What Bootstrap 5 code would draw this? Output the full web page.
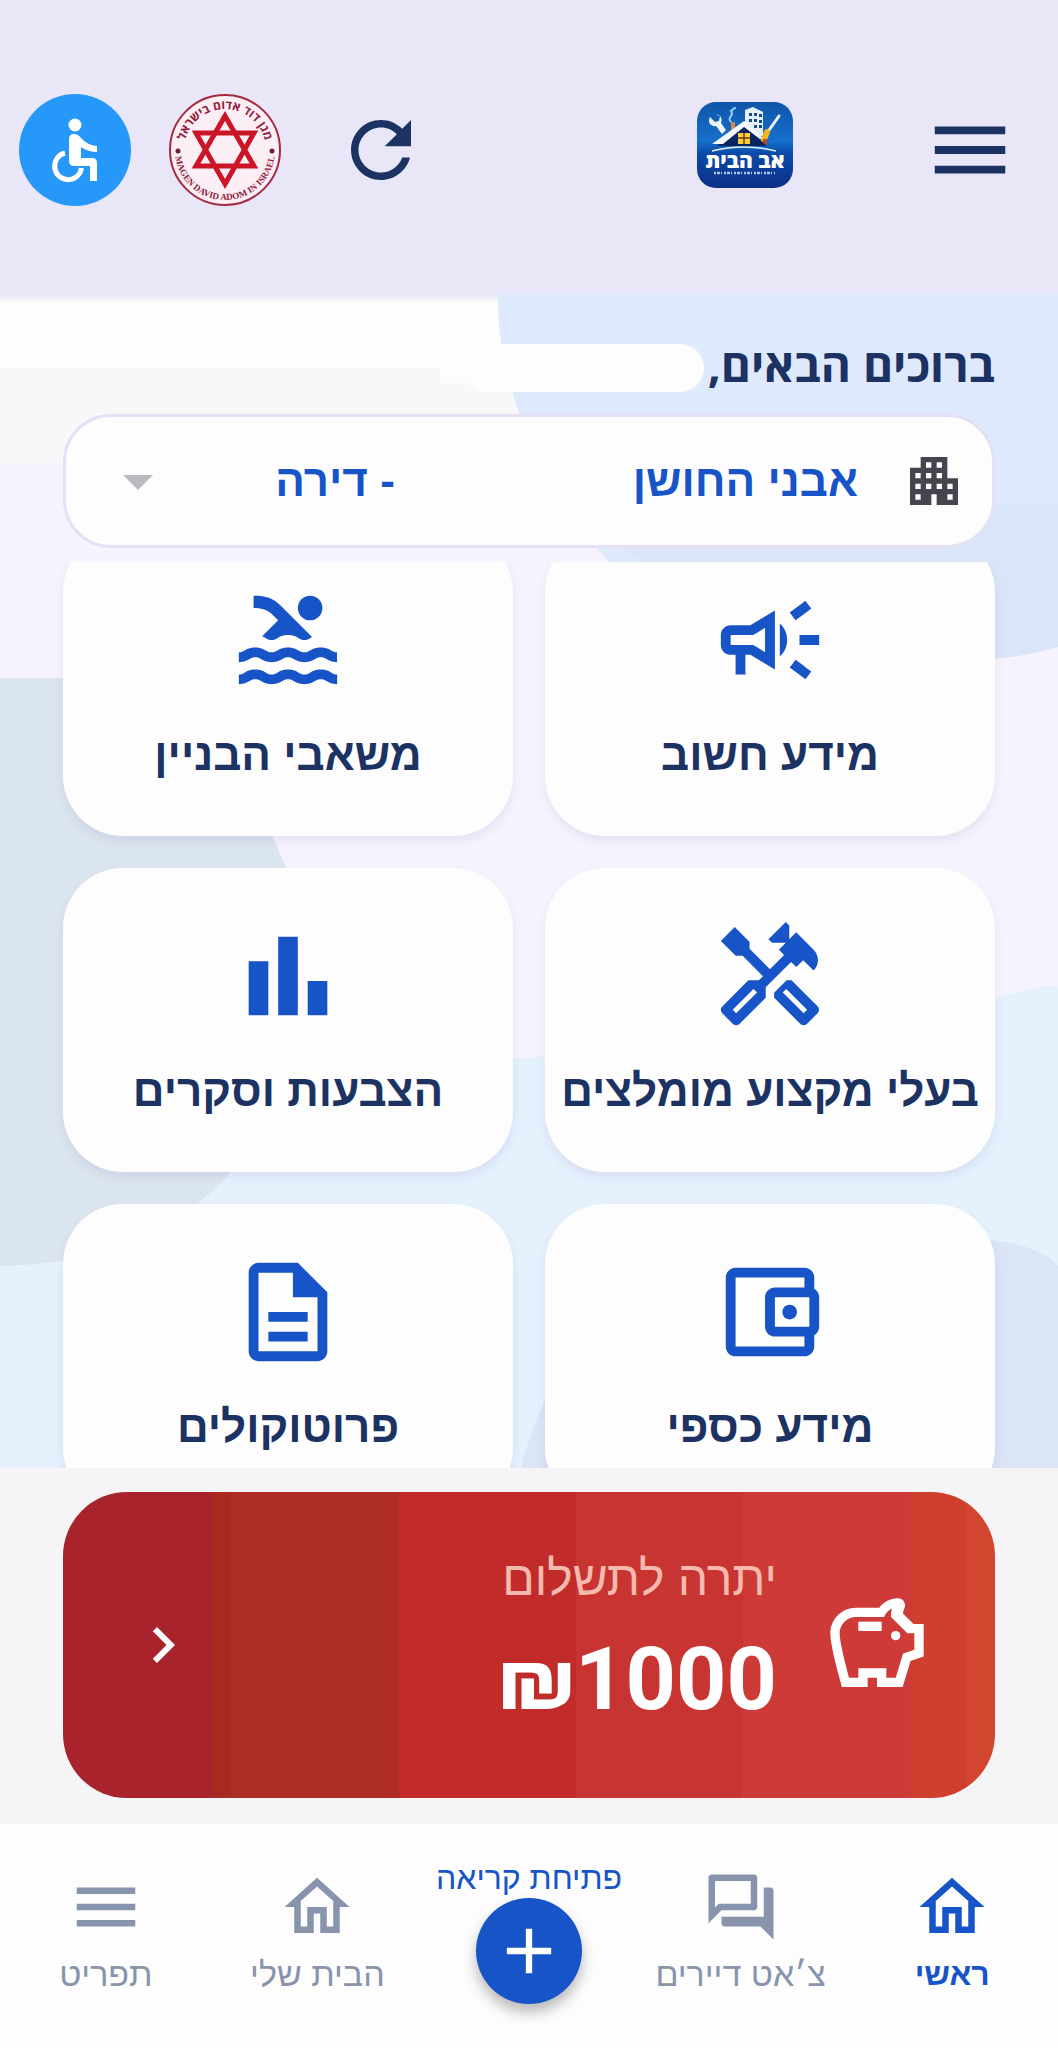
<!DOCTYPE html>
<html lang="he" dir="rtl">
<head>
<meta charset="utf-8">
<meta name="viewport" content="width=device-width, initial-scale=1">
<title>אב הבית</title>
<link href="https://cdn.jsdelivr.net/npm/bootstrap@5.3.0/dist/css/bootstrap.min.css" rel="stylesheet">
<style>
  :root { --navy: #1c3263; --brand: #1654c8; --muted: #8794ab; --side: 63px; }
  body { font-family: "Liberation Sans", sans-serif; background: #f6f3fe; color: var(--navy); }
  svg { display: block; flex: none; }
  .icon-btn { background: none; border: 0; padding: 0; color: var(--navy); }

  .top-bar { background: #e9e7f7; padding: 94px 41px 88px 19px; }
  .brand-logo { margin: 0 130px 10px 0; }
  .tools { gap: 38px; }
  .refresh-btn { margin-left: 17px; }

  main { min-height: 0; flex: 1 1 0; }
  .backdrop { inset: 0; width: 100%; height: 100%; }
  .welcome { padding: 46px var(--side) 0; height: 120px; }
  .welcome h1 { font-family: "Open Sans", "Liberation Sans", sans-serif; font-size: 46px; line-height: 48px; font-weight: 700; }
  .name-slot { width: 240px; height: 48px; background: #fdfdfe; border-radius: 24px; }
  .picker { margin: 0 var(--side); height: 134px; border-radius: 48px; background: #fdfdfe; border: 3px solid #e4e0f5; padding: 0 26px 0 36px; gap: 44px; }
  .picker label, .picker select { font-size: 44px; line-height: 56px; font-weight: 700; color: var(--brand); }
  .picker select { border: 0; padding: 0 194px 0 72px; appearance: none; outline: 0;
    background: transparent url("data:image/svg+xml,%3Csvg xmlns='http://www.w3.org/2000/svg' viewBox='0 0 24 24'%3E%3Cpath fill='%23b9b9be' d='M7 10l5 5 5-5z'/%3E%3C/svg%3E") no-repeat left center / 72px; }
  .scroller { margin-top: 14px; padding: 0 var(--side); min-height: 0; flex: 1 1 0; overflow: hidden auto; scrollbar-width: none; }
  .scroller::-webkit-scrollbar { display: none; }
  .tiles { display: grid; grid-template-columns: 1fr 1fr; gap: 32px; margin-top: -30px; }
  .tile { height: 304px; padding-top: 49px; gap: 24px; border-radius: 60px; background: #fdfdfe; color: var(--navy); font-size: 44px; line-height: 64px; font-weight: 700; box-shadow: 0 5px 10px rgba(90, 70, 150, .1); white-space: nowrap; }
  .tile svg { color: var(--brand); }

  .pay-area { background: #f5f5f8; padding: 24px var(--side) 26px; }
  .pay { height: 306px; border-radius: 64px; padding: 0 62px 0 64px; color: #fff;
    background: linear-gradient(90deg, #a8232b 0 16%, #a8291f 16% 18%, #ae2d26 18% 36%, #c12c2b 36% 55%, #c83432 55% 73%, #cd3a38 73% 91%, #ce3f2d 91% 97%, #d2452f 97%); }
  .pay-text { margin-right: 44px; gap: 20px; }
  .pay-label { font-size: 48px; line-height: 56px; color: #f5b9ae; }
  .pay-sum { font-family: Roboto, "Open Sans", sans-serif; font-size: 88px; line-height: 104px; font-weight: 700; }

  .tabs { background: #fdfdfe; padding: 44px 0 0; height: 224px; }
  .tab { flex: 1 1 0; color: var(--muted); font-size: 34px; line-height: 40px; gap: 8px; white-space: nowrap; }
  .tab.active { color: var(--brand); font-size: 32px; font-weight: 700; }
  .tab-add { color: var(--brand); gap: 10px; }
  .tab-add .add-label { font-size: 32px; line-height: 20px; }
  .add-disc { width: 106px; height: 106px; background: var(--brand); color: #fff; box-shadow: 0 8px 14px rgba(0, 0, 0, .28); }
</style>
<script src="https://cdn.jsdelivr.net/npm/bootstrap@5.3.0/dist/js/bootstrap.bundle.min.js"></script>
</head>
<body class="d-flex flex-column vh-100">

<header class="top-bar d-flex align-items-center flex-shrink-0">
  <button class="icon-btn" type="button" aria-label="תפריט">
    <svg width="94" height="94" viewBox="0 0 24 24" fill="currentColor"><path d="M3 18h18v-2H3v2zm0-5h18v-2H3v2zm0-7v2h18V6H3z"/></svg>
  </button>
  <a class="brand-logo" href="#" aria-label="אב הבית">
    <svg width="96" height="86" viewBox="0 0 96 86">
      <defs><linearGradient id="sky" x1="0" y1="0" x2="0" y2="1"><stop offset="0" stop-color="#0f55a8"/><stop offset=".45" stop-color="#1670cd"/><stop offset=".6" stop-color="#0b4aa8"/><stop offset="1" stop-color="#0c2f86"/></linearGradient></defs>
      <rect width="96" height="86" rx="19" fill="url(#sky)"/>
      <path d="M34 20c-5-5 4-6 0-11 4-3 2-3 5-3" fill="none" stroke="#8fd0f5" stroke-width="2"/>
      <path d="M48 8l8-3 10 5v24H48z" fill="#e6f0fa"/>
      <path d="M52 11h3v3h-3zm5 0h3v3h-3zm5 1h3v3h-3zM52 17h3v3h-3zm5 0h3v3h-3zm5 1h3v3h-3zM57 23h3v3h-3zm5 0h3v3h-3z" fill="#164a8e"/>
      <path d="M13 15l5 5 4-1 1-5-4-1c4-1 7 4 5 8l5 7-4 4-6-8c-5 1-9-4-6-9z" fill="#edf4fb"/>
      <path d="M82 14l-12 17" stroke="#edf4fb" stroke-width="3" stroke-linecap="round"/>
      <path d="M70 30l-4 10" stroke="#f3b51d" stroke-width="6" stroke-linecap="round"/>
      <path d="M68 37v6" stroke="#b64a2b" stroke-width="4"/>
      <path d="M34 20h4v7l-4 3z" fill="#d5894c"/>
      <path d="M20 44l27-21 23 21z" fill="#0a2460"/>
      <path d="M15 42l32-23 19 17-3 1-16-12-21 17z" fill="#f2f7fc"/>
      <path d="M41 31h12v11H41z" fill="#ffce3a"/><path d="M47 31v11M41 36h12" stroke="#6e3c12" stroke-width="1.5"/>
      <path d="M15 49q32-8 64 0" fill="none" stroke="#eaf3fb" stroke-width="1.5"/>
      <text x="48" y="66" text-anchor="middle" font-family="Open Sans, sans-serif" font-weight="800" font-size="21" fill="#fff">אב הבית</text>
      <path d="M17 71h61" stroke="#a9c8ee" stroke-width="2.5" stroke-dasharray="2 1 3 1 1 2"/>
    </svg>
  </a>
  <div class="tools d-flex align-items-center me-auto">
    <button class="icon-btn refresh-btn" type="button" aria-label="רענון">
      <svg width="90" height="90" viewBox="0 0 24 24" fill="currentColor"><path d="M17.65 6.35C16.2 4.9 14.21 4 12 4c-4.42 0-7.99 3.58-7.99 8s3.57 8 7.99 8c3.73 0 6.84-2.55 7.73-6h-2.08c-.82 2.33-3.04 4-5.65 4-3.31 0-6-2.69-6-6s2.69-6 6-6c1.66 0 3.14.69 4.22 1.78L13 11h7V4l-2.35 2.35z"/></svg>
    </button>
    <a href="#" aria-label="מגן דוד אדום">
      <svg width="112" height="112" viewBox="-56 -56 112 112">
        <defs>
          <path id="arcTop" d="M-41 0a41 41 0 0 1 82 0"/>
          <path id="arcLow" d="M-50 0a50 50 0 0 0 100 0"/>
        </defs>
        <circle r="55" fill="#fbeef5" stroke="#a52a3f" stroke-width="2"/>
        <g fill="none" stroke="#cb1526" stroke-width="5"><path d="M0-34L29 16h-58z"/><path d="M0 34L29-17h-58z"/></g>
        <circle cx="-47" cy="1" r="2.5" fill="#6e2235"/><circle cx="47" cy="1" r="2.5" fill="#6e2235"/>
        <text font-family="Open Sans, sans-serif" font-weight="700" font-size="12" fill="#92213a" text-anchor="middle" direction="ltr"><textPath href="#arcTop" startOffset="50%">מגן דוד אדום בישראל</textPath></text>
        <text font-family="Liberation Serif, serif" font-size="9" font-weight="700" fill="#92213a" text-anchor="middle" direction="ltr"><textPath href="#arcLow" startOffset="50%">MAGEN DAVID ADOM IN ISRAEL</textPath></text>
      </svg>
    </a>
    <button class="icon-btn" type="button" aria-label="נגישות">
      <svg width="112" height="112" viewBox="0 0 112 112">
        <circle cx="56" cy="56" r="56" fill="#2598fa"/>
        <circle cx="56" cy="31" r="6.5" fill="#fff"/>
        <path d="M50 45q0-5 5-5 4 0 7 4 6 7 16 8v6q-9 0-16-5v11h11q5 0 5 5v18h-7V72H55q-5 0-5-5z" fill="#fff"/>
        <path d="M46 59a13.500 13.500 0 1 0 16.500 15" fill="none" stroke="#fff" stroke-width="5"/>
      </svg>
    </button>
  </div>
</header>

<main class="position-relative d-flex flex-column overflow-hidden">
  <svg class="backdrop position-absolute" viewBox="0 294 1058 1174" preserveAspectRatio="none" aria-hidden="true">
    <defs><linearGradient id="edge" x1="0" y1="0" x2="0" y2="1"><stop offset="0" stop-color="#e9e7f7"/><stop offset="1" stop-color="#fdfdfe"/></linearGradient></defs>
    <path fill="#f6f3fe" d="M0 294h1058v1174H0z"/>
    <path fill="#f8f8fa" d="M0 360h560v104H0z"/>
    <path fill="#fdfdfe" d="M0 303h530v80H440v-15H170v0H0z"/>
    <path fill="url(#edge)" d="M0 294h530v10H0z"/>
    <path fill="#dfe9fc" d="M498 294h560v330H700Q560 560 510 384 497 340 498 294z"/>
    <path fill="#dae5f8" d="M600 530h340v-27h118v144q-100 30-220-10-140-20-238-107z"/>
    <path fill="#e5f1fd" d="M1058 985q-60 5-120 40L500 1060q-150 60-280 120L0 1260v208h1058z"/>
    <path fill="#dbe5f0" d="M0 678h60q180 30 240 230 10 170-70 265-80 90-230 93z"/>
    <path fill="#dbe5f6" d="M1058 1266q-20-22-70-26-200 20-360 50-80 70-107 178h537z"/>
  </svg>

  <div class="welcome position-relative d-flex align-items-start flex-shrink-0">
    <h1 class="m-0 flex-shrink-0">ברוכים הבאים,</h1>
    <span class="name-slot me-1 mt-1"></span>
  </div>

  <div class="picker position-relative d-flex align-items-center flex-shrink-0">
    <svg width="64" height="64" viewBox="0 0 24 24" fill="#45454f"><path d="M17 11V3H7v4H3v14h8v-4h2v4h8V11h-4zM7 19H5v-2h2v2zm0-4H5v-2h2v2zm0-4H5V9h2v2zm4 4H9v-2h2v2zm0-4H9V9h2v2zm0-4H9V5h2v2zm4 8h-2v-2h2v2zm0-4h-2V9h2v2zm0-4h-2V5h2v2zm4 12h-2v-2h2v2zm0-4h-2v-2h2v2z"/></svg>
    <label class="flex-shrink-0" for="flat">אבני החושן</label>
    <select class="flex-fill" id="flat"><option>- דירה</option></select>
  </div>

  <div class="scroller position-relative">
    <nav class="tiles">
      <a class="tile d-flex flex-column align-items-center text-decoration-none" href="#">
        <svg width="118" height="118" viewBox="0 0 24 24" fill="currentColor"><path d="M18 11v2h4v-2h-4zM16 17.610c.96.71 2.210 1.650 3.200 2.390.4-.53.8-1.070 1.200-1.600-.99-.74-2.240-1.680-3.200-2.400-.4.54-.8 1.080-1.200 1.610zM20.400 5.600c-.4-.53-.8-1.070-1.200-1.600-.99.74-2.240 1.680-3.200 2.400.4.53.8 1.070 1.200 1.600.96-.72 2.210-1.650 3.200-2.400zM4 9c-1.100 0-2 .9-2 2v2c0 1.100.9 2 2 2h1v4h2v-4h1l5 3V6L8 9H4zm5.030 1.710L11 9.530v4.940l-1.970-1.180-.48-.29H4v-2h4.550l.48-.29zM15.500 12c0-1.330-.58-2.530-1.500-3.350v6.690c.92-.81 1.500-2.010 1.500-3.340z"/></svg>
        <span>מידע חשוב</span>
      </a>
      <a class="tile d-flex flex-column align-items-center text-decoration-none" href="#">
        <svg width="118" height="118" viewBox="0 0 24 24" fill="currentColor"><path d="M22 21c-1.110 0-1.730-.37-2.180-.64-.37-.22-.6-.36-1.150-.36-.56 0-.78.13-1.150.36-.46.27-1.070.64-2.180.64s-1.730-.37-2.180-.64c-.37-.22-.6-.36-1.150-.36-.56 0-.78.13-1.150.36-.46.27-1.080.64-2.190.64-1.110 0-1.730-.37-2.180-.64-.37-.23-.6-.36-1.150-.36s-.78.13-1.150.36c-.46.27-1.080.64-2.190.64v-2c.56 0 .78-.13 1.150-.36.46-.27 1.080-.64 2.190-.64s1.730.37 2.180.64c.37.23.59.36 1.150.36.56 0 .78-.13 1.150-.36.46-.27 1.080-.64 2.190-.64 1.110 0 1.730.37 2.180.64.37.22.6.36 1.150.36s.78-.13 1.150-.36c.45-.27 1.070-.64 2.180-.64s1.730.37 2.180.64c.37.23.59.36 1.150.36v2zm0-4.500c-1.110 0-1.730-.37-2.180-.64-.37-.22-.6-.36-1.150-.36-.56 0-.78.13-1.150.36-.45.27-1.070.64-2.180.64s-1.730-.37-2.180-.64c-.37-.22-.6-.36-1.150-.36-.56 0-.78.13-1.150.36-.45.27-1.070.64-2.180.64s-1.730-.37-2.180-.64c-.37-.22-.6-.36-1.150-.36s-.78.13-1.150.36c-.47.27-1.090.64-2.200.64v-2c.56 0 .78-.13 1.150-.36.45-.27 1.070-.64 2.180-.64s1.730.37 2.180.64c.37.22.6.36 1.150.36.56 0 .78-.13 1.150-.36.45-.27 1.070-.64 2.180-.64s1.730.37 2.180.64c.37.22.6.36 1.150.36s.78-.13 1.150-.36c.45-.27 1.070-.64 2.180-.64s1.730.37 2.180.64c.37.22.6.36 1.150.36v2zM8.670 12c.56 0 .78-.13 1.150-.36.46-.27 1.080-.64 2.190-.64 1.110 0 1.730.37 2.180.64.37.22.6.36 1.150.36s.78-.13 1.150-.36c.12-.07.26-.15.41-.23L10.480 5C8.930 3.450 7.500 2.990 5 3v2.500c1.820-.01 2.890.39 4 1.500l1 1-3.250 3.250c.31.12.56.27.77.39.37.23.59.36 1.150.36z"/><circle cx="16.500" cy="5.500" r="2.500"/></svg>
        <span>משאבי הבניין</span>
      </a>
      <a class="tile d-flex flex-column align-items-center text-decoration-none" href="#">
        <svg width="118" height="118" viewBox="0 0 24 24" fill="currentColor"><path d="M21.670 18.170l-5.300-5.300h-.99l-2.540 2.540v.99l5.300 5.300c.39.39 1.020.39 1.410 0l2.120-2.120c.39-.38.39-1.020 0-1.410zm-2.830 1.420l-4.240-4.240.71-.71 4.240 4.240-.71.71z"/><path d="M17.340 10.190l1.410-1.410 2.120 2.120c1.170-1.170 1.170-3.070 0-4.240l-3.540-3.540-1.410 1.410V1.710L15.220 1l-3.540 3.540.71.71h2.830l-1.410 1.410 1.060 1.060-2.890 2.890-4.130-4.130V5.060L4.830 2.040 2 4.870 5.030 7.900h1.410l4.130 4.130-.85.85H7.600l-5.300 5.300c-.39.39-.39 1.020 0 1.410l2.120 2.120c.39.39 1.020.39 1.410 0l5.300-5.300v-2.120l5.150-5.150 1.060 1.050zm-7.980 5.150l-4.240 4.240-.71-.71 4.240-4.240.71.71z"/></svg>
        <span>בעלי מקצוע מומלצים</span>
      </a>
      <a class="tile d-flex flex-column align-items-center text-decoration-none" href="#">
        <svg width="118" height="118" viewBox="0 0 24 24" fill="currentColor"><path d="M4 9h4v11H4zM10 4h4v16h-4zM16 13h4v7h-4z"/></svg>
        <span>הצבעות וסקרים</span>
      </a>
      <a class="tile d-flex flex-column align-items-center text-decoration-none" href="#">
        <svg width="118" height="118" viewBox="0 0 24 24" fill="currentColor"><path d="M21 7.280V5c0-1.100-.9-2-2-2H5c-1.110 0-2 .9-2 2v14c0 1.100.89 2 2 2h14c1.100 0 2-.9 2-2v-2.280c.59-.35 1-.98 1-1.720V9c0-.74-.41-1.370-1-1.720zM20 9v6h-7V9h7zM5 19V5h14v2h-6c-1.100 0-2 .9-2 2v6c0 1.100.9 2 2 2h6v2H5z"/><circle cx="16" cy="12" r="1.500"/></svg>
        <span>מידע כספי</span>
      </a>
      <a class="tile d-flex flex-column align-items-center text-decoration-none" href="#">
        <svg width="118" height="118" viewBox="0 0 24 24" fill="currentColor"><path d="M8 16h8v2H8zm0-4h8v2H8zm6-10H6c-1.100 0-2 .9-2 2v16c0 1.100.89 2 1.990 2H18c1.100 0 2-.9 2-2V8l-6-6zm4 18H6V4h7v5h5v11z"/></svg>
        <span>פרוטוקולים</span>
      </a>
    </nav>
  </div>
</main>

<section class="pay-area flex-shrink-0">
  <a class="pay d-flex align-items-center text-decoration-none" href="#">
    <svg width="112" height="112" viewBox="0 0 24 24" fill="currentColor"><path fill-rule="evenodd" d="M19.830 7.500l-2.270-2.270c.07-.42.18-.81.32-1.150.08-.18.12-.37.12-.58 0-.83-.67-1.500-1.500-1.500-1.640 0-3.090.79-4 2h-5C4.460 4 2 6.460 2 9.500S4.500 21 4.500 21H10v-2h2v2h5.500l1.680-5.590 2.820-.94V7.500h-2.170zM20 13.030l-2.410.8L16.010 19H14v-2H8v2H6.010C5.240 16.200 4 11.300 4 9.500 4 7.570 5.570 6 7.500 6h6.030c.3-.83.9-1.500 1.670-1.840-.1.380-.17.78-.2 1.170V6l3.500 3.500H20v3.530z"/><path d="M8 7h5v2H8z"/><circle cx="16" cy="10" r="1"/></svg>
    <div class="pay-text d-flex flex-column pb-2">
      <div class="pay-label">יתרה לתשלום</div>
      <div class="pay-sum">₪1000</div>
    </div>
    <svg class="me-auto" width="72" height="72" viewBox="0 0 24 24" fill="currentColor"><path d="M10 6L8.590 7.410 13.170 12l-4.580 4.590L10 18l6-6z"/></svg>
  </a>
</section>

<nav class="tabs d-flex flex-shrink-0">
  <a class="tab active d-flex flex-column align-items-center text-decoration-none" href="#">
    <svg width="78" height="78" viewBox="0 0 24 24" fill="currentColor"><path d="M12 5.690l5 4.500V18h-2v-6H9v6H7v-7.810l5-4.500M12 3L2 12h3v8h6v-6h2v6h6v-8h3L12 3z"/></svg>
    <span>ראשי</span>
  </a>
  <a class="tab d-flex flex-column align-items-center text-decoration-none" href="#">
    <svg width="78" height="78" viewBox="0 0 24 24" fill="currentColor"><path d="M15 4v7H5.170L4 12.170V4h11m1-2H3c-.55 0-1 .45-1 1v14l4-4h10c.55 0 1-.45 1-1V3c0-.55-.45-1-1-1zm5 4h-2v9H6v2c0 .55.45 1 1 1h11l4 4V7c0-.55-.45-1-1-1z"/></svg>
    <span>צ׳אט דיירים</span>
  </a>
  <a class="tab tab-add d-flex flex-column align-items-center text-decoration-none" href="#">
    <span class="add-label">פתיחת קריאה</span>
    <span class="add-disc rounded-circle d-flex align-items-center justify-content-center">
      <svg width="76" height="76" viewBox="0 0 24 24" fill="currentColor"><path d="M19 13h-6v6h-2v-6H5v-2h6V5h2v6h6v2z"/></svg>
    </span>
  </a>
  <a class="tab d-flex flex-column align-items-center text-decoration-none" href="#">
    <svg width="78" height="78" viewBox="0 0 24 24" fill="currentColor"><path d="M12 5.690l5 4.500V18h-2v-6H9v6H7v-7.810l5-4.500M12 3L2 12h3v8h6v-6h2v6h6v-8h3L12 3z"/></svg>
    <span>הבית שלי</span>
  </a>
  <a class="tab d-flex flex-column align-items-center text-decoration-none" href="#">
    <svg width="78" height="78" viewBox="0 0 24 24" fill="currentColor"><path d="M3 18h18v-2H3v2zm0-5h18v-2H3v2zm0-7v2h18V6H3z"/></svg>
    <span>תפריט</span>
  </a>
</nav>
</body>
</html>
